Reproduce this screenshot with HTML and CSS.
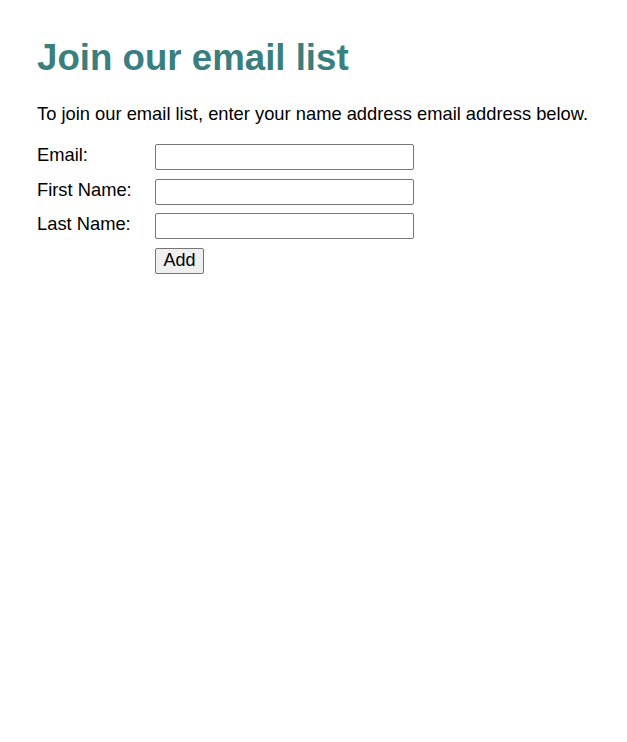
FILE: index.html
```html
<!DOCTYPE html>
<html lang="en">
<head>
<meta charset="utf-8">
<title>Join our email list</title>
<link rel="stylesheet" href="styles.css">
</head>
<body>
<main class="page">
  <h1 class="title">Join our email list</h1>
  <p class="intro">To join our email list, enter your name address email address below.</p>
  <form class="form">
    <label class="label" for="email">Email:</label>
    <input class="field" id="email" type="email">
    <label class="label" for="first">First Name:</label>
    <input class="field" id="first" type="text">
    <label class="label" for="last">Last Name:</label>
    <input class="field" id="last" type="text">
    <span></span>
    <div><button class="btn" type="button">Add</button></div>
  </form>
</main>
</body>
</html>
```
FILE: styles.css
```css
html, body {
  margin: 0;
  padding: 0;
  background: #ffffff;
}
body {
  font-family: "Liberation Sans", Arial, sans-serif;
  font-size: 18.33px;
  color: #000000;
}
.page {
  padding: 37px 37px 0 37px;
}
.title {
  margin: 0;
  font-size: 36.67px;
  line-height: 41px;
  font-weight: bold;
  color: #3a7f80;
}
.intro {
  margin: 25px 0 0 0;
  line-height: 21px;
}
.form {
  margin-top: 20px;
  display: grid;
  grid-template-columns: 118px 259px;
  row-gap: 8.67px;
  align-items: start;
}
.label {
  line-height: 21px;
  padding-top: 0;
}
.field {
  box-sizing: border-box;
  width: 259px;
  height: 26px;
  margin: 0;
  border: 1px solid #767676;
  border-radius: 2px;
  font-size: 18px;
  font-family: inherit;
  padding: 1px 3px;
}
.btn {
  box-sizing: border-box;
  height: 26px;
  width: 49px;
  margin: 0;
  padding: 0;
  font-family: inherit;
  font-size: 18px;
  color: #000;
  background: #efefef;
  border: 1px solid #767676;
  border-radius: 2px;
}
```
